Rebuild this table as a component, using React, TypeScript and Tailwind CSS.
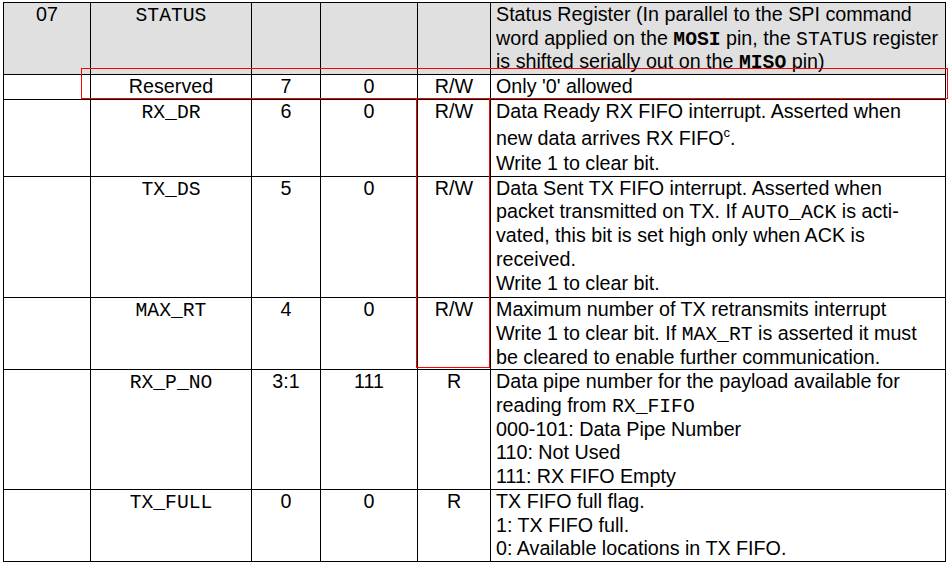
import type { ReactNode } from 'react';

// register table: nRF24L01 STATUS register (07)
type Row = {
  addr?: string;
  name: string;
  mono: boolean;
  bit: string;
  reset: string;
  type: string;
  lines: ReactNode[];
  head?: boolean;
  extra?: string;
};

const Mono = ({ children, bold }: { children: ReactNode; bold?: boolean }) => (
  <span
    className={`font-['Liberation_Mono','Courier_New',monospace] leading-none ${bold ? 'font-bold' : 'font-normal'}`}
  >
    {children}
  </span>
);

const rows: Row[] = [
  {
    addr: '07',
    name: 'STATUS',
    mono: true,
    bit: '',
    reset: '',
    type: '',
    head: true,
    lines: [
      'Status Register (In parallel to the SPI command',
      <>word applied on the <Mono bold>MOSI</Mono> pin, the <Mono>STATUS</Mono> register</>,
      <>is shifted serially out on the <Mono bold>MISO</Mono> pin)</>,
    ],
  },
  { name: 'Reserved', mono: false, bit: '7', reset: '0', type: 'R/W', lines: ["Only '0' allowed"] },
  {
    name: 'RX_DR',
    mono: true,
    bit: '6',
    reset: '0',
    type: 'R/W',
    lines: [
      'Data Ready RX FIFO interrupt. Asserted when',
      <span className="block leading-[28.5px]">
        new data arrives RX FIFO<sup className="text-[13px] top-[-0.6em]">c</sup>.
      </span>,
      'Write 1 to clear bit.',
    ],
  },
  {
    name: 'TX_DS',
    mono: true,
    bit: '5',
    reset: '0',
    type: 'R/W',
    extra: 'pb-[2px]',
    lines: [
      'Data Sent TX FIFO interrupt. Asserted when',
      <>packet transmitted on TX. If <Mono>AUTO_ACK</Mono> is acti-</>,
      'vated, this bit is set high only when ACK is',
      'received.',
      'Write 1 to clear bit.',
    ],
  },
  {
    name: 'MAX_RT',
    mono: true,
    bit: '4',
    reset: '0',
    type: 'R/W',
    lines: [
      'Maximum number of TX retransmits interrupt',
      <>Write 1 to clear bit. If <Mono>MAX_RT</Mono> is asserted it must</>,
      'be cleared to enable further communication.',
    ],
  },
  {
    name: 'RX_P_NO',
    mono: true,
    bit: '3:1',
    reset: '111',
    type: 'R',
    lines: [
      'Data pipe number for the payload available for',
      <>reading from <Mono>RX_FIFO</Mono></>,
      '000-101: Data Pipe Number',
      '110: Not Used',
      '111: RX FIFO Empty',
    ],
  },
  {
    name: 'TX_FULL',
    mono: true,
    bit: '0',
    reset: '0',
    type: 'R',
    lines: ['TX FIFO full flag.', '1: TX FIFO full.', '0: Available locations in TX FIFO.'],
  },
];

const cell = 'border border-black align-top p-0';

export default function App() {
  return (
    <div className="relative w-[949px] h-[564px] overflow-hidden bg-white pl-[3px] pt-[2px] font-['Liberation_Sans',Arial,sans-serif] text-[19.7px] leading-[23.7px] text-black">
      <table className="table-fixed border-collapse w-[942px]">
        <colgroup>
          <col className="w-[87px]" />
          <col className="w-[161px]" />
          <col className="w-[69px]" />
          <col className="w-[97px]" />
          <col className="w-[73px]" />
          <col className="w-[455px]" />
        </colgroup>
        <tbody>
          {rows.map((r) => (
            <tr key={r.name} className={r.head ? 'bg-[#e0e0e0]' : 'bg-white'}>
              <td className={`${cell} text-center`}>{r.addr}</td>
              <td className={`${cell} text-center`}>
                {r.mono ? <Mono>{r.name}</Mono> : r.name}
              </td>
              <td className={`${cell} text-center`}>{r.bit}</td>
              <td className={`${cell} text-center`}>{r.reset}</td>
              <td className={`${cell} text-center`}>{r.type}</td>
              <td className={`${cell} pl-[5px] ${r.extra ?? ''}`}>
                {r.lines.map((l, i) => (
                  <div key={i} className="whitespace-nowrap">
                    {l}
                  </div>
                ))}
              </td>
            </tr>
          ))}
        </tbody>
      </table>

      {/* selection highlights drawn over the table */}
      <div className="absolute left-[81px] top-[68px] w-[867px] h-[31px] border border-[#ff0000]" />
      <div className="absolute left-[416px] top-[98px] w-[74px] h-[270px] border border-[#ff0000]" />
    </div>
  );
}
